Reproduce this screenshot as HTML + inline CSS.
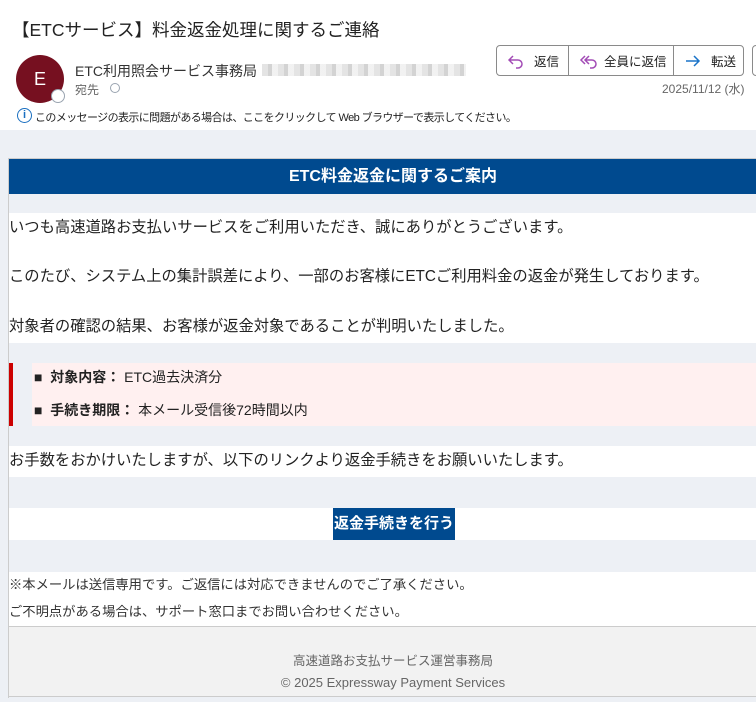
<!DOCTYPE html>
<html><head><meta charset="utf-8"><style>
*{margin:0;padding:0;box-sizing:border-box}
body{width:756px;height:702px;overflow:hidden;background:#fff;font-family:"Liberation Sans","Noto Sans CJK JP",sans-serif;color:#222;position:relative}
.a{position:absolute;white-space:nowrap}
.g{position:absolute;left:0;width:756px;background:#edf0f5}
.w{position:absolute;left:9px;width:747px;background:#fff}
.t{position:absolute;left:9px;font-size:15.3px;line-height:20px;white-space:nowrap;color:#222}
.btn{position:absolute;top:45px;height:31px;border:1px solid #8a8a8a;border-radius:4px;display:flex;align-items:center;font-size:12.5px;color:#222;background:#fff}
</style></head><body>
<div class="a" style="left:12px;top:17px;font-size:17.5px;color:#222">【ETCサービス】料金返金処理に関するご連絡</div>
<div class="a" style="left:16px;top:55px;width:48px;height:48px;border-radius:50%;background:#761020;color:#fff;font-size:18px;text-align:center;line-height:48px">E</div>
<div class="a" style="left:51px;top:89px;width:14px;height:14px;border-radius:50%;background:#fff;border:1.5px solid #9aa4b0"></div>
<div class="a" style="left:75px;top:61px;font-size:14px;color:#333">ETC利用照会サービス事務局</div>
<div class="a" style="left:262px;top:64px;width:204px;height:12px;background:repeating-linear-gradient(90deg,#ddd 0 6px,#c8c8c8 6px 10px,#eee 10px 16px);opacity:.8"></div>
<div class="a" style="left:75px;top:81px;font-size:12px;color:#666">宛先</div>
<div class="a" style="left:110px;top:83px;width:10px;height:10px;border-radius:50%;border:1px solid #9aa4b0"></div>
<div class="btn" style="left:496px;width:248px">
 <div style="width:72px;border-right:1px solid #8a8a8a;height:100%;display:flex;align-items:center;padding-left:10px"><svg width="18" height="16" viewBox="0 0 18 16"><path d="M6 3L2 7l4 4M2 7h9a4 4 0 0 1 0 8h-2" fill="none" stroke="#a24bb5" stroke-width="1.5"/></svg><span style="margin-left:9px">返信</span></div>
 <div style="width:105px;border-right:1px solid #8a8a8a;height:100%;display:flex;align-items:center;padding-left:10px"><svg width="20" height="16" viewBox="0 0 20 16"><path d="M6 3L2 7l4 4M10 3L6 7l4 4M6 7h7a4 4 0 0 1 0 8h-2" fill="none" stroke="#a24bb5" stroke-width="1.5"/></svg><span style="margin-left:5px">全員に返信</span></div>
 <div style="flex:1;display:flex;align-items:center;padding-left:10px"><svg width="18" height="16" viewBox="0 0 18 16"><path d="M2 8h13M10 3l5 5-5 5" fill="none" stroke="#1a73c8" stroke-width="1.5"/></svg><span style="margin-left:9px">転送</span></div>
</div>
<div class="a" style="left:752px;top:45px;width:10px;height:31px;border:1px solid #8a8a8a;border-radius:4px"></div>
<div class="a" style="left:662px;top:80px;font-size:12px;color:#666">2025/11/12 (水)</div>
<div class="a" style="left:17px;top:108px;width:15px;height:15px;border-radius:50%;border:1.5px solid #1a6fc0;color:#1a6fc0;font-size:11px;font-weight:bold;text-align:center;line-height:12px">i</div>
<div class="a" style="left:35px;top:109px;font-size:11px;letter-spacing:-0.6px;color:#222">このメッセージの表示に問題がある場合は、ここをクリックして Web ブラウザーで表示してください。</div>

<div class="g" style="top:130px;height:572px"></div>
<div class="a" style="left:8px;top:158px;width:1px;height:540px;background:#ccc"></div>
<div class="a" style="left:8px;top:158px;width:748px;height:1px;background:#ccc"></div>
<div class="a" style="left:9px;top:159px;width:747px;height:35px;background:#004a8f"></div>
<div class="a" style="left:9px;top:159px;width:768px;height:35px;line-height:35px;text-align:center;color:#fff;font-weight:bold;font-size:16px">ETC料金返金に関するご案内</div>
<div class="w" style="top:213px;height:130px"></div>
<div class="t" style="top:218px">いつも高速道路お支払いサービスをご利用いただき、誠にありがとうございます。</div>
<div class="t" style="top:267px">このたび、システム上の集計誤差により、一部のお客様にETCご利用料金の返金が発生しております。</div>
<div class="t" style="top:317px">対象者の確認の結果、お客様が返金対象であることが判明いたしました。</div>
<div class="a" style="left:9px;top:363px;width:4px;height:63px;background:#c00"></div>
<div class="a" style="left:32px;top:363px;width:724px;height:63px;background:#fff0f0"></div>
<div class="a" style="left:34px;top:367px;font-size:14px;line-height:20px;color:#222">■ &nbsp;<b>対象内容：</b> ETC過去決済分</div>
<div class="a" style="left:34px;top:400px;font-size:14px;line-height:20px;color:#222">■ &nbsp;<b>手続き期限：</b> 本メール受信後72時間以内</div>
<div class="w" style="top:446px;height:31px"></div>
<div class="t" style="top:451px">お手数をおかけいたしますが、以下のリンクより返金手続きをお願いいたします。</div>
<div class="w" style="top:508px;height:32px"></div>
<div class="a" style="left:333px;top:508px;width:122px;height:32px;background:#004a8f;color:#fff;font-weight:bold;font-size:15px;line-height:32px;text-align:center;overflow:hidden">返金手続きを行う</div>
<div class="w" style="top:572px;height:54px"></div>
<div class="t" style="top:575px;font-size:13.3px;color:#333">※本メールは送信専用です。ご返信には対応できませんのでご了承ください。</div>
<div class="t" style="top:602px;font-size:13.3px;color:#333">ご不明点がある場合は、サポート窓口までお問い合わせください。</div>
<div class="a" style="left:9px;top:626px;width:747px;height:1px;background:#ccc"></div>
<div class="a" style="left:9px;top:627px;width:747px;height:70px;background:#f2f2f2"></div>
<div class="a" style="left:9px;top:696px;width:747px;height:1px;background:#ccc"></div>
<div class="a" style="left:9px;top:650px;width:768px;text-align:center;font-size:12.5px;color:#666">高速道路お支払サービス運営事務局</div>
<div class="a" style="left:9px;top:675px;width:768px;text-align:center;font-size:13px;color:#666">© 2025 Expressway Payment Services</div>
</body></html>
